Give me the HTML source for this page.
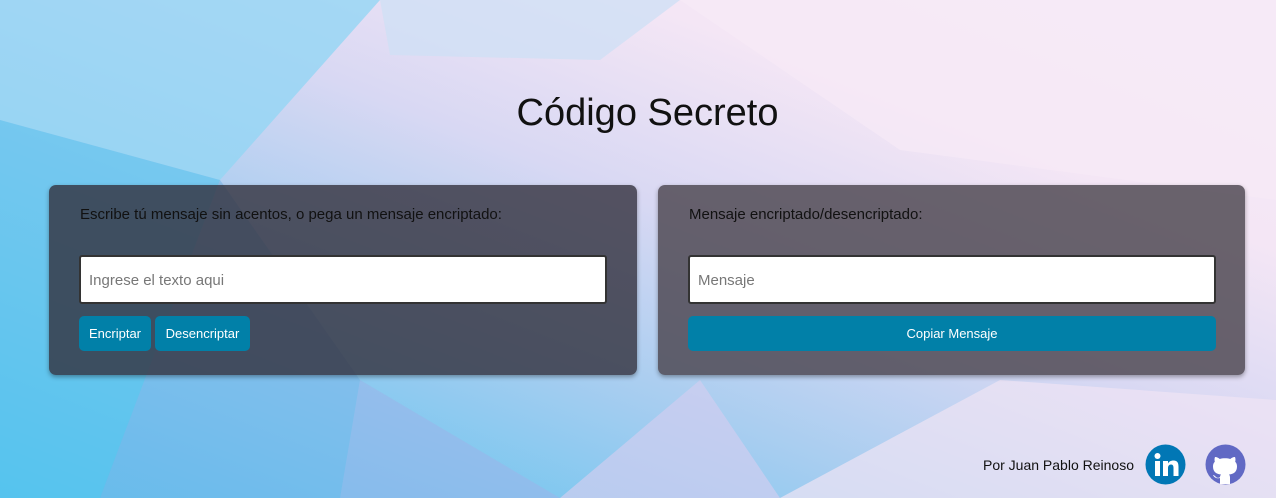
<!DOCTYPE html>
<html><head><meta charset="utf-8"><style>
body{margin:0;width:1276px;height:498px;overflow:hidden;position:relative;font-family:"Liberation Sans",sans-serif;}
svg.bg{position:absolute;left:0;top:0}
h1{position:absolute;top:92px;left:0;width:1295px;text-align:center;margin:0;font-weight:normal;font-size:38px;color:#111}
.card{position:absolute;top:185px;height:190px;width:588px;background:rgba(50,48,60,0.8);border-radius:7px;box-shadow:0 2px 5px rgba(0,0,0,.35)}
.lab{position:absolute;left:31px;top:21px;font-size:15px;color:#111}
.inp{position:absolute;left:30px;top:70px;width:524px;height:45px;background:#fff;border:2px solid #333;border-radius:3px;box-sizing:content-box}
.inp span{position:absolute;left:8px;top:15px;font-size:15px;color:#777}
.btn{position:absolute;top:131px;height:35px;background:#0180a8;border-radius:5px;color:#fff;font-size:13px;line-height:36px;text-align:center}
.foot{position:absolute;left:983px;top:457px;font-size:14px;color:#111}
</style></head><body>
<svg class="bg" width="1276" height="498">
<defs><linearGradient id="g" x1="0" y1="1" x2="1" y2="0"><stop offset="0" stop-color="#45c0ee"/><stop offset=".35" stop-color="#a6cdf0"/><stop offset=".55" stop-color="#d8d8f3"/><stop offset=".75" stop-color="#f4e6f5"/><stop offset="1" stop-color="#f4ecf8"/></linearGradient></defs>
<rect width="1276" height="498" fill="url(#g)"/>
<polygon points="0,0 380,0 220,180 0,120" fill="#94d6f4" opacity=".8"/>
<polygon points="380,0 680,0 600,60 390,55" fill="#cfe0f5" opacity=".8"/>
<polygon points="0,120 220,180 100,498 0,498" fill="#5cc5ee" opacity=".7"/>
<polygon points="100,498 220,180 360,380 340,498" fill="#7ab8ea" opacity=".6"/>
<polygon points="340,498 360,380 560,498" fill="#9ab6ea" opacity=".6"/>
<polygon points="560,498 700,380 780,498" fill="#d0cdf0" opacity=".7"/>
<polygon points="680,0 1276,0 1276,200 900,150" fill="#f7e9f6" opacity=".7"/>
<polygon points="780,498 1000,380 1276,400 1276,498" fill="#f0e4f3" opacity=".7"/>
</svg>
<h1>Código Secreto</h1>
<div class="card" style="left:49px">
<div class="lab">Escribe tú mensaje sin acentos, o pega un mensaje encriptado:</div>
<div class="inp"><span>Ingrese el texto aqui</span></div>
<div class="btn" style="left:30px;width:72px">Encriptar</div>
<div class="btn" style="left:106px;width:95px">Desencriptar</div>
</div>
<div class="card" style="left:658px;width:587px;background:rgba(75,68,78,0.82)">
<div class="lab">Mensaje encriptado/desencriptado:</div>
<div class="inp"><span>Mensaje</span></div>
<div class="btn" style="left:30px;width:528px">Copiar Mensaje</div>
</div>
<div class="foot">Por Juan Pablo Reinoso</div>
<svg style="position:absolute;left:1145px;top:444px" width="41" height="41" viewBox="0 0 41 41"><circle cx="20.5" cy="20.5" r="20" fill="#0177b5"/><rect x="10" y="17" width="5" height="15" fill="#fff"/><circle cx="12.5" cy="12" r="3" fill="#fff"/><path d="M18 17h5v2.5c1-2 3-3 5.5-3 4 0 5 2.5 5 6.5V32h-5v-8c0-2-.5-3.5-2.5-3.5S23 22 23 24v8h-5z" fill="#fff"/></svg>
<svg style="position:absolute;left:1205px;top:444px" width="41" height="41" viewBox="0 0 41 41"><circle cx="20.5" cy="20.5" r="20" fill="#6169c4"/><path d="M15 40v-6c-4 1-6-1-7-3 1 0 2 1 3 2s3 1 4 0c0-1 .5-2 1-2.5-5-.5-8-3-8-8 0-2 .5-3.5 1.8-4.8-.3-1-.5-3 .2-4.7 2 0 3.5 1 4.8 2 1.5-.5 3.300-.7 5.2-.7s3.7.2 5.2.7c1.3-1 2.8-2 4.8-2 .7 1.7.5 3.7.2 4.7 1.3 1.3 1.8 2.8 1.8 4.8 0 5-3 7.500-8 8 .7.7 1 1.7 1 3v6.5z" fill="#fff"/></svg>
</body></html>
